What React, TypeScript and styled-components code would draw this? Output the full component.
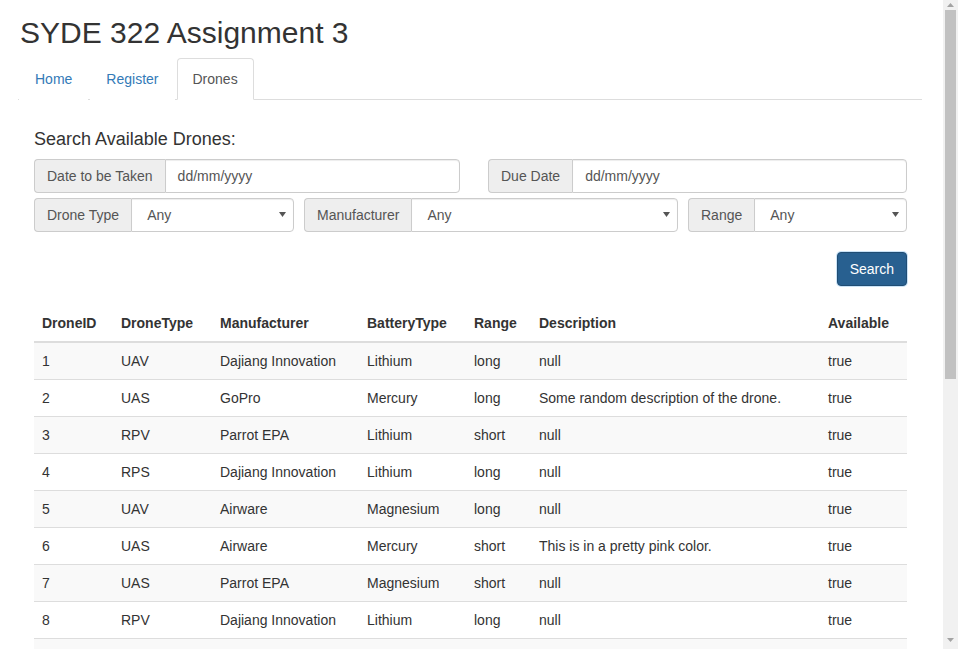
import React from "react";
import styled, { createGlobalStyle } from "styled-components";

const GlobalStyle = createGlobalStyle`
  html, body { margin: 0; padding: 0; background: #fff; height: 100%; overflow: hidden; }
  body {
    font-family: "Liberation Sans", Arial, sans-serif;
    font-size: 14px;
    line-height: 1.42857143;
    color: #333;
  }
  * { box-sizing: border-box; }
`;

const Viewport = styled.div`
  height: 100vh;
  overflow: hidden;
`;

const ScrollBar = styled.div`
  position: fixed;
  top: 0;
  right: 0;
  width: 15px;
  height: 100vh;
  background: #f1f1f1;
  display: flex;
  flex-direction: column;
  align-items: center;
`;

const ArrowBox = styled.div<{ $down?: boolean }>`
  height: 10px;
  display: flex;
  align-items: center;
  justify-content: center;
  margin-top: ${(p) => (p.$down ? "auto" : "0")};
  margin-bottom: ${(p) => (p.$down ? "4px" : "0")};
  svg { width: 7px; height: 4px; fill: #a3a3a3; }
`;

const Thumb = styled.div`
  width: 11px;
  height: 369px;
  background: #c1c1c1;
`;

const Page = styled.div`
  width: 904px;
  margin-left: 18px;
  padding-top: 16px;
  padding-bottom: 20px;
`;

const Title = styled.h1`
  font-size: 30px;
  font-weight: 500;
  line-height: 1.1;
  margin: 0 0 9px 2px;
  color: #333;
`;

const Tabs = styled.ul`
  display: flex;
  list-style: none;
  margin: 0;
  padding: 0 0 0 1px;
  border-bottom: 1px solid #ddd;
`;

const Tab = styled.li<{ $active?: boolean }>`
  margin-bottom: -1px;
  margin-right: 2px;
  a {
    display: block;
    padding: 10px 15px;
    line-height: 20px;
    border: 1px solid ${(p) => (p.$active ? "#ddd" : "transparent")};
    border-bottom-color: ${(p) => (p.$active ? "#fff" : "transparent")};
    border-radius: 4px 4px 0 0;
    background: #fff;
    color: ${(p) => (p.$active ? "#555" : "#337ab7")};
    text-decoration: none;
  }
`;

const Panel = styled.div`
  padding: 30px 15px 0 16px;
`;

const Heading = styled.h4`
  font-size: 18px;
  font-weight: 500;
  line-height: 1.1;
  margin: 0 0 9px;
  color: #333;
`;

const FormRow = styled.div<{ $cols: string; $gap: number }>`
  display: grid;
  grid-template-columns: ${(p) => p.$cols};
  column-gap: ${(p) => p.$gap}px;
  margin-bottom: 5px;
`;

const InputGroup = styled.div`
  display: flex;
  height: 34px;
`;

const Addon = styled.span`
  display: flex;
  align-items: center;
  padding: 6px 12px;
  font-size: 14px;
  color: #555;
  background: #eee;
  border: 1px solid #ccc;
  border-right: 0;
  border-radius: 4px 0 0 4px;
  white-space: nowrap;
`;

const TextInput = styled.div`
  flex: 1;
  display: flex;
  align-items: center;
  padding: 6px 12px;
  color: #555;
  background: #fff;
  border: 1px solid #ccc;
  border-radius: 0 4px 4px 0;
  box-shadow: inset 0 1px 1px rgba(0, 0, 0, 0.075);
`;

const Select = styled.div`
  flex: 1;
  display: flex;
  align-items: center;
  justify-content: space-between;
  padding: 6px 7px 6px 15px;
  color: #555;
  background: #fff;
  border: 1px solid #ccc;
  border-radius: 0 4px 4px 0;
  box-shadow: inset 0 1px 1px rgba(0, 0, 0, 0.075);
`;

const Caret = styled.svg`
  width: 7px;
  height: 5px;
  fill: #555;
`;

const ButtonBar = styled.div`
  display: flex;
  justify-content: flex-end;
  margin-top: 20px;
  margin-bottom: 19px;
`;

const Button = styled.button`
  height: 34px;
  padding: 6px 12px;
  font-family: inherit;
  font-size: 14px;
  line-height: 20px;
  color: #fff;
  background: #286090;
  border: 1px solid #204d74;
  border-radius: 4px;
  box-shadow: 0 0 0 1px rgba(102, 175, 233, 0.35);
`;

const Table = styled.table`
  width: 100%;
  table-layout: fixed;
  border-collapse: collapse;
  border-spacing: 0;
`;

const Th = styled.th`
  text-align: left;
  font-weight: bold;
  padding: 8px;
  line-height: 20px;
  border-bottom: 2px solid #ddd;
  vertical-align: bottom;
`;

const Row = styled.tr<{ $striped: boolean }>`
  background: ${(p) => (p.$striped ? "#f9f9f9" : "#fff")};
`;

const Td = styled.td`
  padding: 8px;
  line-height: 20px;
  border-top: 1px solid #ddd;
  white-space: nowrap;
  overflow: hidden;
`;

const caret = (
  <Caret viewBox="0 0 7 5">
    <path d="M0 0 L7 0 L3.5 5 Z" />
  </Caret>
);

const columns = [
  { label: "DroneID", width: 79 },
  { label: "DroneType", width: 99 },
  { label: "Manufacturer", width: 147 },
  { label: "BatteryType", width: 107 },
  { label: "Range", width: 65 },
  { label: "Description", width: 289 },
  { label: "Available", width: 87 },
];

const drones: string[][] = [
  ["1", "UAV", "Dajiang Innovation", "Lithium", "long", "null", "true"],
  ["2", "UAS", "GoPro", "Mercury", "long", "Some random description of the drone.", "true"],
  ["3", "RPV", "Parrot EPA", "Lithium", "short", "null", "true"],
  ["4", "RPS", "Dajiang Innovation", "Lithium", "long", "null", "true"],
  ["5", "UAV", "Airware", "Magnesium", "long", "null", "true"],
  ["6", "UAS", "Airware", "Mercury", "short", "This is in a pretty pink color.", "true"],
  ["7", "UAS", "Parrot EPA", "Magnesium", "short", "null", "true"],
  ["8", "RPV", "Dajiang Innovation", "Lithium", "long", "null", "true"],
  ["9", "UAV", "GoPro", "Lithium", "short", "null", "true"],
];

export default function App() {
  return (
    <>
      <GlobalStyle />
      <Viewport>
        <Page>
          <Title>SYDE 322 Assignment 3</Title>
          <Tabs>
            <Tab><a href="#">Home</a></Tab>
            <Tab><a href="#">Register</a></Tab>
            <Tab $active><a href="#">Drones</a></Tab>
          </Tabs>
          <Panel>
            <Heading>Search Available Drones:</Heading>
            <FormRow $cols="426px 1fr" $gap={28}>
              <InputGroup>
                <Addon>Date to be Taken</Addon>
                <TextInput>dd/mm/yyyy</TextInput>
              </InputGroup>
              <InputGroup>
                <Addon>Due Date</Addon>
                <TextInput>dd/mm/yyyy</TextInput>
              </InputGroup>
            </FormRow>
            <FormRow $cols="260px 374px 1fr" $gap={10}>
              <InputGroup>
                <Addon>Drone Type</Addon>
                <Select>Any{caret}</Select>
              </InputGroup>
              <InputGroup>
                <Addon>Manufacturer</Addon>
                <Select>Any{caret}</Select>
              </InputGroup>
              <InputGroup>
                <Addon>Range</Addon>
                <Select>Any{caret}</Select>
              </InputGroup>
            </FormRow>
            <ButtonBar>
              <Button>Search</Button>
            </ButtonBar>
            <Table>
              <colgroup>
                {columns.map((c) => (
                  <col key={c.label} style={{ width: c.width }} />
                ))}
              </colgroup>
              <thead>
                <tr>
                  {columns.map((c) => (
                    <Th key={c.label}>{c.label}</Th>
                  ))}
                </tr>
              </thead>
              <tbody>
                {drones.map((d, i) => (
                  <Row key={d[0]} $striped={i % 2 === 0}>
                    {d.map((v, j) => (
                      <Td key={j}>{v}</Td>
                    ))}
                  </Row>
                ))}
              </tbody>
            </Table>
          </Panel>
        </Page>
      </Viewport>
      <ScrollBar>
        <ArrowBox>
          <svg viewBox="0 0 7 4"><path d="M3.5 0 L7 4 L0 4 Z" /></svg>
        </ArrowBox>
        <Thumb />
        <ArrowBox $down>
          <svg viewBox="0 0 7 4"><path d="M0 0 L7 0 L3.5 4 Z" /></svg>
        </ArrowBox>
      </ScrollBar>
    </>
  );
}
